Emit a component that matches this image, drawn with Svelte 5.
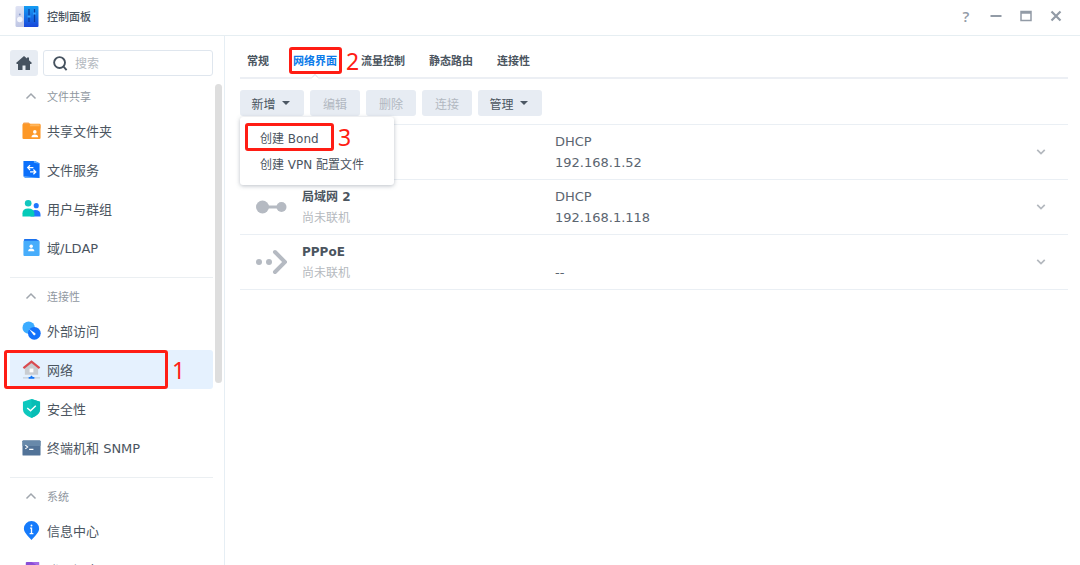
<script lang="ts">
  type Item = { icon: string; label: string };
  type Group = { title: string; items: Item[] };
  type Iface = { id: string; icon: string; name: string; status: string; mode: string; ip: string };

  const groups: Group[] = [
    {
      title: '文件共享',
      items: [
        { icon: 'folder', label: '共享文件夹' },
        { icon: 'files', label: '文件服务' },
        { icon: 'users', label: '用户与群组' },
        { icon: 'ldap', label: '域/LDAP' },
      ],
    },
    {
      title: '连接性',
      items: [
        { icon: 'external', label: '外部访问' },
        { icon: 'network', label: '网络' },
        { icon: 'shield', label: '安全性' },
        { icon: 'terminal', label: '终端机和 SNMP' },
      ],
    },
    {
      title: '系统',
      items: [
        { icon: 'info', label: '信息中心' },
        { icon: 'portal', label: '登录门户' },
      ],
    },
  ];

  const tabs = ['常规', '网络界面', '流量控制', '静态路由', '连接性'];

  const ifaces: Iface[] = [
    { id: 'lan1', icon: 'lan', name: '', status: '', mode: 'DHCP', ip: '192.168.1.52' },
    { id: 'lan2', icon: 'lan', name: '局域网 2', status: '尚未联机', mode: 'DHCP', ip: '192.168.1.118' },
    { id: 'pppoe', icon: 'pppoe', name: 'PPPoE', status: '尚未联机', mode: '', ip: '--' },
  ];

  let current = $state('网络');
  let tab = $state('网络界面');
  let menuOpen = $state(true);
  let query = $state('');
</script>

{#snippet icon(name: string)}
  <svg class="icon" viewBox="0 0 20 20" aria-hidden="true">
    {#if name === 'folder'}
      <path d="M1 3q0-1.500 1.500-1.500h4.500l2 2h9q1.500 0 1.500 1.500v3H1z" fill="#f5a55a" />
      <rect x="0.500" y="3" width="19" height="16" rx="1.200" fill="#fd9827" />
      <path d="M9 3.500h9.500v2H8z" fill="#ffb65c" />
      <circle cx="13.500" cy="11.500" r="1.900" fill="#fff" />
      <path d="M10 17q0-2.800 3.500-2.800t3.500 2.800z" fill="#fff" />
    {:else if name === 'files'}
      <path d="M1.500 1h12l5 2.500V19h-15l-2-2z" fill="#0b70fb" />
      <path d="M12.500 1h1.500l4.500 3-6-1z" fill="#63b1ff" />
      <path d="M1.500 17h2l15 2h-15z" fill="#5fa9ff" />
      <path d="M12 8H6m2.500-2.500L6 8l2.500 2.500M8.500 12.500h6M12 10l2.500 2.500L12 15" fill="none" stroke="#fff" stroke-width="1.300" />
    {:else if name === 'users'}
      <circle cx="6.500" cy="4.500" r="3.500" fill="#12c7bf" />
      <circle cx="15" cy="7" r="2.700" fill="#1f76ff" />
      <path d="M9 18.500v-4q1-3 5-3 5.500 0 5.500 5v2z" fill="#1f76ff" />
      <path d="M.500 18.500v-3.500q0-5 6-5t6.500 5v3.500z" fill="#04cbb9" />
    {:else if name === 'ldap'}
      <path d="M2 4V2q0-1 1-1h12l3 2v3z" fill="#1b72ee" />
      <rect x="1.500" y="3" width="17" height="16" rx="1" fill="#47adfb" />
      <circle cx="9.700" cy="8.700" r="1.800" fill="#fff" />
      <path d="M6.500 14q0-2.900 3.200-2.900T13 14z" fill="#fff" />
    {:else if name === 'external'}
      <circle cx="7" cy="7" r="6.500" fill="#3cacff" />
      <circle cx="13" cy="13" r="6.700" fill="#1472fb" />
      <path d="M7.500 8.500l6.500 4.500a1.300 1.300 0 0 1-1.800 1.800z" fill="#fff" />
    {:else if name === 'network'}
      <path d="M3 8l7-5 7 5v7.500H3z" fill="#c9cdd2" />
      <rect x="8" y="9" width="4" height="4" fill="#fff" />
      <path d="M1.500 8.500L10 1.700l8.500 6.800" fill="none" stroke="#d94b50" stroke-width="2.300" />
      <path d="M1 18.800h18" stroke="#c5d0dc" stroke-width="1.400" />
      <path d="M7 19.800v-1.800h1.500L10 16.300l1.500 1.700H13v1.800z" fill="#1677f5" />
    {:else if name === 'shield'}
      <path d="M10 0l9 3v8q0 5.500-9 9-9-3.500-9-9V3z" fill="#0dc8be" />
      <path d="M10 0l9 3v8q0 5.500-9 9z" fill="#07bdb5" />
      <path d="M5.500 9.500l3.500 3 5.500-5.500" fill="none" stroke="#fff" stroke-width="1.500" />
    {:else if name === 'terminal'}
      <rect x=".500" y="2.500" width="19" height="16" rx="1" fill="#527398" />
      <rect x=".500" y="2.500" width="19" height="6" rx="1" fill="#6889aa" />
      <path d="M3.500 7.500L6 9.500l-2.500 2M7.500 12H12" fill="none" stroke="#fff" stroke-width="1.200" />
    {:else if name === 'info'}
      <path d="M10 0a8 8 0 0 1 8 8c0 4-3.500 7-8 12-4.500-5-8-8-8-12a8 8 0 0 1 8-8z" fill="#167bfb" />
      <path d="M8.500 7.500H10V13M8 13.200h4" fill="none" stroke="#fff" stroke-width="1.400" />
      <circle cx="10" cy="4.800" r="1" fill="#fff" />
    {:else if name === 'portal'}
      <rect x="4" y="2" width="14" height="17" rx="1" fill="#8a4ed6" />
      <path d="M10 2h8v5z" fill="#a56be6" />
    {/if}
  </svg>
{/snippet}

{#snippet chevron(dir: string)}
  <svg class="chevron {dir}" viewBox="0 0 12 8" aria-hidden="true">
    <path d="M1.500 6.500L6 2l4.500 4.500" />
  </svg>
{/snippet}

<div class="window">
  <header class="titlebar">
    <svg class="logo" viewBox="0 0 24 24" aria-hidden="true">
      <defs>
        <linearGradient id="panel" x1="0" y1="0" x2="0" y2="1">
          <stop offset="0" stop-color="#149df3" />
          <stop offset="1" stop-color="#1847db" />
        </linearGradient>
        <linearGradient id="door" x1="0" y1="0" x2="0" y2="1">
          <stop offset="0" stop-color="#dfe3f4" />
          <stop offset="1" stop-color="#bfc6e4" />
        </linearGradient>
      </defs>
      <path d="M2 2h8v21H2q-1.500 0-1.500-1.500v-18Q.500 2 2 2z" fill="url(#door)" />
      <circle cx="4.800" cy="15.500" r="2.800" fill="#f5f6fc" />
      <circle cx="4.800" cy="10.500" r=".900" fill="#8b9cc9" />
      <path d="M9 2h13.500q1 0 1 1v19q0 1-1 1H9z" fill="url(#panel)" />
      <path d="M14 5v13M19.500 5v13" stroke="#0d3b9c" stroke-width="1.200" />
      <path d="M12.500 12.500h3M18 9.500h3" stroke="#2fa0ff" stroke-width="2" />
    </svg>
    <h1>控制面板</h1>
    <div class="controls">
      <button class="help" aria-label="帮助">?</button>
      <button aria-label="最小化">
        <svg viewBox="0 0 12 12"><path d="M.500 6h11" stroke-width="2" /></svg>
      </button>
      <button aria-label="最大化">
        <svg viewBox="0 0 12 12"><path d="M1 1.500h10v9H1zM1 3h10" stroke-width="1.500" /></svg>
      </button>
      <button aria-label="关闭">
        <svg viewBox="0 0 12 12"><path d="M1.500 1.500l9 9m0-9l-9 9" stroke-width="2.200" /></svg>
      </button>
    </div>
  </header>

  <div class="content">
    <aside>
      <div class="tools">
        <button class="home" aria-label="主页">
          <svg viewBox="0 0 16 16"><path d="M8 1L0 8l1 1h1v6h4.500v-4.500h3V15H14V9h1l1-1-3-2.700V2.500h-2v1z" /></svg>
        </button>
        <label class="search">
          <svg viewBox="0 0 16 16"><circle cx="7" cy="7" r="5.800" /><path d="M11 11l3.500 4" /></svg>
          <input type="text" placeholder="搜索" aria-label="搜索" bind:value={query} />
        </label>
      </div>

      <nav>
        {#each groups as group}
          <section>
            <button class="group">{@render chevron('up')}{group.title}</button>
            {#each group.items as item}
              <button class="item" class:active={current === item.label} onclick={() => (current = item.label)}>
                {@render icon(item.icon)}
                {item.label}
                {#if item.icon === 'network'}
                  <span class="mark mark-nav"><span class="step">1</span></span>
                {/if}
              </button>
            {/each}
          </section>
        {/each}
      </nav>
      <div class="scrollbar"></div>
    </aside>

    <main>
      <div class="tabs" role="tablist">
        {#each tabs as name}
          <button role="tab" aria-selected={tab === name} class:selected={tab === name} onclick={() => (tab = name)}>
            {name}
            {#if name === '网络界面'}
              <span class="mark mark-tab"><span class="step">2</span></span>
            {/if}
          </button>
        {/each}
      </div>

      <div class="toolbar">
        <div class="dropdown">
          <button class="wide" aria-expanded={menuOpen} onclick={() => (menuOpen = !menuOpen)}>新增<i class="caret"></i></button>
          {#if menuOpen}
            <div class="menu" role="menu">
              <button role="menuitem">创建 Bond<span class="mark mark-menu"><span class="step">3</span></span></button>
              <button role="menuitem">创建 VPN 配置文件</button>
            </div>
          {/if}
        </div>
        <button disabled>编辑</button>
        <button disabled>删除</button>
        <button disabled>连接</button>
        <button class="wide">管理<i class="caret"></i></button>
      </div>

      <ul class="ifaces">
        {#each ifaces as iface (iface.id)}
          <li>
            <svg class="port" viewBox="0 0 32 26" aria-hidden="true">
              {#if iface.icon === 'lan'}
                <path d="M7 13h19" stroke-width="3" />
                <circle cx="7.500" cy="13" r="6.500" />
                <circle cx="26.500" cy="13" r="5" />
              {:else}
                <circle cx="4" cy="13" r="3" />
                <circle cx="14" cy="13" r="3" />
                <path d="M20 3l10 10-10 10" fill="none" stroke-width="4" stroke-linecap="round" />
              {/if}
            </svg>
            <div class="who">
              <strong>{iface.name}</strong>
              <span class="status">{iface.status}</span>
            </div>
            <div class="address">
              <span>{iface.mode}</span>
              <span>{iface.ip}</span>
            </div>
            <button class="expand" aria-label="展开">{@render chevron('down')}</button>
          </li>
        {/each}
      </ul>
    </main>
  </div>
</div>

<style>
:global(body) { margin: 0; background: #fff; }
.window {
  --text: #4b555f; --line: #eaeff4; --fill: #e7ecf3; --red: #ff1d14;
  height: 100vh; display: flex; flex-direction: column; overflow: hidden;
  color: var(--text); font: 12px "DejaVu Sans", "Noto Sans CJK SC", sans-serif;
}
button, input { font: inherit; color: inherit; }
button { border: 0; padding: 0; background: transparent; cursor: pointer; }

.titlebar {
  flex: none; height: 36px; padding: 0 18px 4px 15px; box-sizing: border-box;
  display: flex; align-items: center; border-bottom: 1px solid #e6eef2;
}
.logo { width: 24px; height: 24px; }
.titlebar h1 { margin: 0 0 0 8px; font-size: 11px; font-weight: 500; }
.controls { margin-left: auto; display: flex; gap: 18px; }
.controls button { width: 12px; height: 20px; display: grid; place-items: center; color: #929ba6; }
.controls .help { font: 600 15px "Open Sans", sans-serif; }
.controls svg { width: 12px; height: 12px; fill: none; stroke: currentColor; }

.content { flex: 1; min-height: 0; display: flex; }
aside {
  position: relative; flex: none; width: 225px; box-sizing: border-box;
  padding: 14px 11px 0 10px; border-right: 1px solid #e6eef4;
}
.tools { display: flex; gap: 5px; height: 26px; margin-bottom: 5px; }
.home { width: 28px; border-radius: 3px; background: var(--fill); display: grid; place-items: center; }
.home svg { width: 16px; height: 16px; fill: #46525f; }
.search {
  flex: 1; min-width: 0; box-sizing: border-box; padding: 0 9px;
  display: flex; align-items: center; gap: 7px;
  border: 1px solid #dfe6ee; border-radius: 3px;
}
.search svg { flex: none; width: 15px; height: 15px; fill: none; stroke: #46525f; stroke-width: 2; }
.search input { width: 100%; min-width: 0; border: 0; outline: 0; padding: 2px 0 0; background: transparent; }
.search input::placeholder { color: #b3b9c0; opacity: 1; }

section { padding-bottom: 10px; margin-bottom: 3px; border-bottom: 1px solid #ebeff2; }
.group {
  width: 100%; height: 30px; padding-left: 15px; display: flex; align-items: center; gap: 10px;
  color: #90979f; font-size: 11px;
}
.chevron { width: 12px; height: 8px; fill: none; stroke: #a0a6ad; stroke-width: 1.5; }
.chevron.down { transform: rotate(180deg); width: 10px; stroke: #b3b8be; stroke-width: 2; }
.item {
  position: relative; width: 100%; height: 39px; padding-left: 12px; border-radius: 3px;
  display: flex; align-items: center; gap: 6px; font-size: 13px; text-align: left;
}
.item.active { background: #e5f1fe; }
.icon { flex: none; width: 19px; height: 19px; }
.scrollbar { position: absolute; top: 48px; right: 2px; width: 7px; height: 299px; border-radius: 4px; background: #dedede; }

main { flex: 1; min-width: 0; padding: 7px 12px 0 15px; }
.tabs { display: flex; gap: 24px; height: 34px; padding-left: 7px; border-bottom: 2px solid #eceff4; }
.tabs button { position: relative; font-size: 11px; font-weight: 700; }
.tabs .selected { color: #0b7bea; }
.tabs .selected::after {
  content: ""; position: absolute; left: 50%; bottom: -4px; width: 5px; height: 5px;
  margin-left: -3px; background: #fff; border: solid #e4e8ef; border-width: 1px 0 0 1px; transform: rotate(45deg);
}

.toolbar { display: flex; gap: 6px; padding: 11px 0 8px; border-bottom: 1px solid var(--line); }
.toolbar > button, .dropdown > button {
  width: 50px; height: 26px; border-radius: 3px; background: var(--fill);
  display: flex; align-items: center; justify-content: center; gap: 6px;
}
.toolbar > .wide, .dropdown > .wide { width: 64px; padding-right: 3px; }
.toolbar > button:disabled { color: #b2b8c1; cursor: default; }
.caret { border: 4px solid transparent; border-top-color: #4c5763; border-bottom: 0; }
.dropdown { position: relative; }
.menu {
  position: absolute; z-index: 2; top: 27px; left: 0; width: 154px; padding: 7px 0 9px; box-sizing: border-box;
  background: #fff; border-radius: 3px; box-shadow: 0 1px 4px rgba(60, 75, 95, 0.35);
}
.menu button { position: relative; display: block; width: 100%; height: 26px; padding-left: 20px; text-align: left; white-space: nowrap; }

.ifaces { list-style: none; margin: 0; padding: 0; }
.ifaces li { height: 55px; box-sizing: border-box; display: flex; align-items: center; border-bottom: 1px solid var(--line); }
.port { flex: none; width: 32px; height: 26px; margin: 0 15px; fill: #b5bac2; stroke: #b5bac2; stroke-width: 0; }
.who, .address { display: flex; flex-direction: column; line-height: 21px; }
.who { width: 253px; padding-top: 2px; }
.who .status { color: #b5b9be; }
.address { flex: 1; font-size: 13px; color: #5b6570; }
.address span { min-height: 21px; }
.expand { margin-right: 22px; display: grid; place-items: center; }

/* numbered callouts drawn over the controls */
.mark { position: absolute; z-index: 3; box-sizing: border-box; border: 3px solid var(--red); border-radius: 3px; pointer-events: none; }
.mark-nav { top: 0; bottom: 0; left: -6px; width: 164px; }
.mark-tab { top: 4px; bottom: 3px; left: -4px; right: -5px; }
.mark-menu { top: -1px; bottom: -1px; left: 5px; width: 89px; }
.step {
  position: absolute; top: 50%; left: 100%; margin-left: 7px; transform: translateY(-50%);
  color: var(--red); font: 400 23px/24px "Noto Sans", sans-serif;
}
</style>
